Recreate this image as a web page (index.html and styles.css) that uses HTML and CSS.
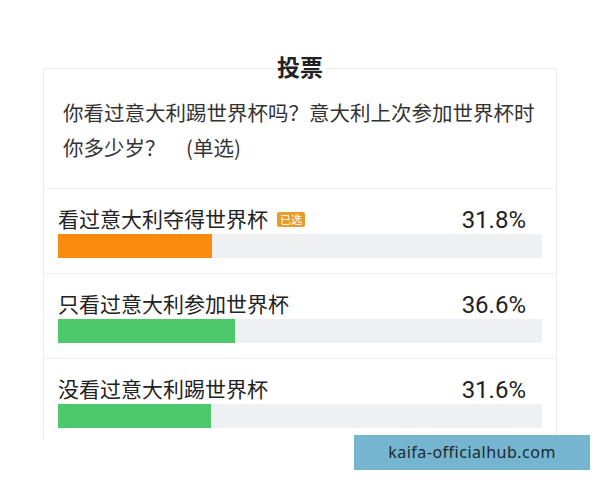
FILE: index.html
```html
<!DOCTYPE html>
<html lang="zh-CN">
<head>
    <meta charset="UTF-8">
    <meta name="viewport" content="width=device-width, initial-scale=1.0">
    <title>投票</title>
    <link rel="stylesheet" href="styles.css">
</head>
<body>
<main class="vote">
    <h1 class="vote-title"><span>投票</span></h1>

    <section class="vote-card">
        <p class="question">你看过意大利踢世界杯吗？意大利上次参加世界杯时你多少岁？　(单选)</p>

        <div class="option">
            <div class="option-head">
                <span class="option-label">看过意大利夺得世界杯<em class="badge">已选</em></span>
                <span class="option-pct">31.8%</span>
            </div>
            <div class="bar"><div class="bar-fill chosen" style="width: 31.8%;"></div></div>
        </div>

        <div class="option">
            <div class="option-head">
                <span class="option-label">只看过意大利参加世界杯</span>
                <span class="option-pct">36.6%</span>
            </div>
            <div class="bar"><div class="bar-fill" style="width: 36.6%;"></div></div>
        </div>

        <div class="option">
            <div class="option-head">
                <span class="option-label">没看过意大利踢世界杯</span>
                <span class="option-pct">31.6%</span>
            </div>
            <div class="bar"><div class="bar-fill" style="width: 31.6%;"></div></div>
        </div>
    </section>
</main>

<div class="watermark">kaifa-officialhub.com</div>
</body>
</html>
```

FILE: styles.css
```css
body {
    margin: 0;
    padding: 0;
    background-color: #fff;
    color: #222;
    font-family: "Noto Sans CJK SC", "Noto Sans", sans-serif;
}

.vote {
    padding: 53px 43px 0;
}

.vote-title {
    position: relative;
    z-index: 1;
    margin: 0 0 -11px;
    text-align: center;
    font-size: 23px;
    line-height: 26px;
    font-weight: bold;
    color: #222;
}

.vote-title span {
    background: #fff;
    padding: 0 2px;
}

.vote-card {
    border: 1px solid #ededed;
    border-bottom: none;
}

.question {
    margin: 0;
    padding: 26px 17px 23px 19px;
    font-size: 20.5px;
    line-height: 35px;
    color: #333;
}

.option {
    border-top: 1px solid #f0f0f0;
    padding: 14px 14px 15px;
}

.option:last-child {
    padding-bottom: 12px;
}

.option-head {
    display: flex;
    justify-content: space-between;
    align-items: flex-end;
    height: 30px;
    padding-right: 16px;
    margin-bottom: 1px;
}

.option-label {
    font-size: 21px;
    line-height: 30px;
    white-space: nowrap;
}

.badge {
    display: inline-block;
    margin-left: 9px;
    padding: 0 3px;
    height: 15px;
    line-height: 15px;
    vertical-align: 3px;
    border-radius: 2px;
    background: #ea9b2b;
    color: #fff;
    font-size: 11px;
    font-style: normal;
}

.option-pct {
    font-family: Roboto, "Liberation Sans", sans-serif;
    font-size: 24px;
    line-height: 1;
    color: #222;
    padding-bottom: 1px;
}

.bar {
    height: 24px;
    background: #eff0f2;
}

.bar-fill {
    height: 100%;
    background: #4dc96b;
}

.bar-fill.chosen {
    background: #fb8b0e;
}

.watermark {
    position: absolute;
    right: 10px;
    bottom: 10px;
    width: 236px;
    height: 35px;
    line-height: 35px;
    background: #75b5cf;
    color: #1b2a33;
    text-align: center;
    font-family: "Noto Sans", sans-serif;
    font-size: 16px;
    letter-spacing: 0.5px;
}
```
